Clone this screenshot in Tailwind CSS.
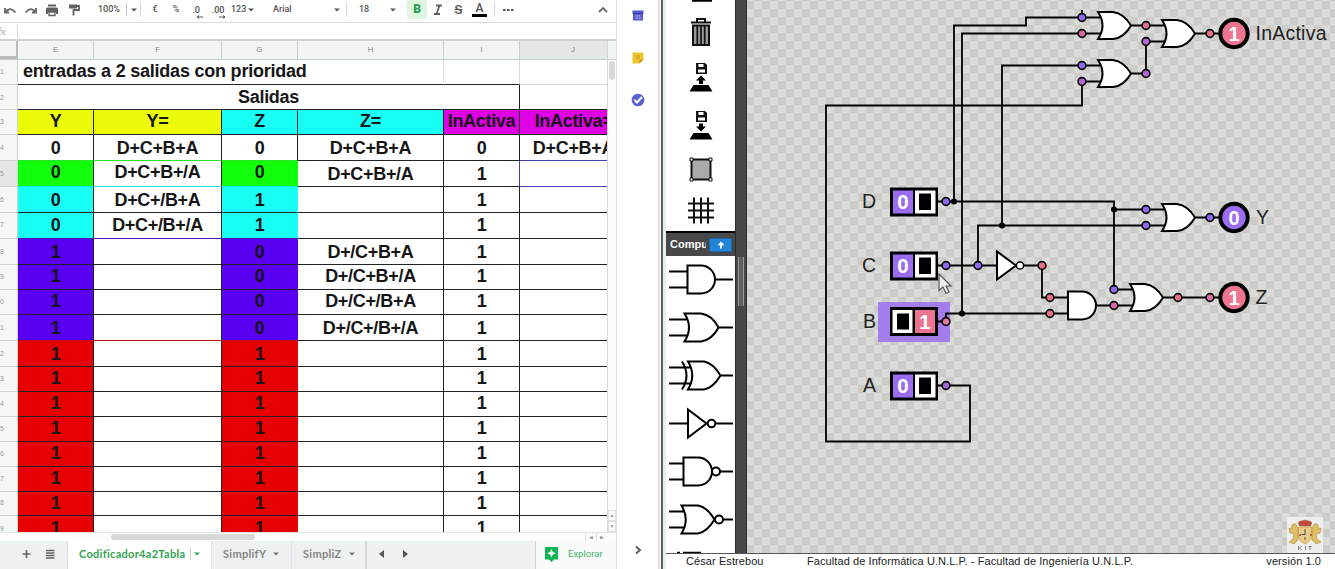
<!DOCTYPE html>
<html lang="es">
<head>
<meta charset="utf-8">
<title>Codificador 4 a 2</title>
<script src="https://cdn.jsdelivr.net/npm/@tailwindcss/browser@4"></script>
</head>
<body class="w-[1335px] h-[569px] overflow-hidden bg-white font-['Liberation_Sans',sans-serif]">
<div class="flex w-[1335px] h-[569px]">

  <!-- Spreadsheet -->
  <section class="w-[617px] shrink-0 flex flex-col border-r border-[#dcdfde] overflow-hidden">
    <div class="h-[23px] shrink-0 flex items-center pb-[3px] border-b border-[#dcdedc] text-[#555] font-[Roboto,sans-serif] text-[9px] font-medium bg-[#fdfefd] whitespace-nowrap">
      <span class="w-[20px] shrink-0"><svg class="w-[20px] h-[18px]" viewBox="0 0 20 18"><path d="M9 11.500H5V7M5.500 11Q10 5 15.500 11.500" fill="none" stroke="#666" stroke-width="1.900"/></svg></span>
      <span class="w-[22px] shrink-0"><svg class="w-[22px] h-[18px]" viewBox="0 0 22 18"><path d="M12 11.500H16V7M15.500 11Q11 5 5.500 11.500" fill="none" stroke="#666" stroke-width="1.900"/></svg></span>
      <span class="w-[20px] shrink-0"><svg class="w-[20px] h-[18px]" viewBox="0 0 20 18"><path d="M6 3.500h8v2H6zM5.500 6.500h9a1.500 1.500 0 0 1 1.500 1.500V13h-2v-2H6v2H4V8A1.500 1.500 0 0 1 5.500 6.500z" fill="#606060"/><path d="M7 11h6v3.500H7z" fill="#fff" stroke="#606060" stroke-width="1.300"/></svg></span>
      <span class="w-[23px] shrink-0"><svg class="w-[23px] h-[18px]" viewBox="0 0 23 18"><path d="M7 3.500h8v4H7z" fill="#606060"/><path d="M15 5h2v4h-5.500v5.500" fill="none" stroke="#606060" stroke-width="1.800"/></svg></span>
      <span class="w-[40px] shrink-0 pl-[13px]">100%</span>
      <span class="w-[3px] h-[13px] border-l border-[#cdb9d2] ml-[1px]"></span>
      <span class="w-[10px] shrink-0 flex justify-center"><svg class="w-[6px] h-[4px]" viewBox="0 0 6 4"><path d="M0 .5h6L3 3.500z" fill="#555"/></svg></span>
      <span class="w-[4px] h-[15px] border-l border-[#dadada] ml-[1px]"></span>
      <span class="w-[22px] shrink-0 text-center">€</span>
      <span class="w-[20px] shrink-0 text-center">%</span>
      <span class="w-[20px] shrink-0 flex flex-col items-center leading-[10px] pt-[4px]">.0<svg class="w-[7px] h-[4px] ml-[7px]" viewBox="0 0 7 4"><path d="M7 2H1M3 .5L1 2l2 1.500" stroke="#555" fill="none"/></svg></span>
      <span class="w-[24px] shrink-0 flex flex-col items-center leading-[10px] pt-[4px]">.00<svg class="w-[7px] h-[4px] ml-[9px]" viewBox="0 0 7 4"><path d="M0 2h6M4 .5L6 2 4 3.500" stroke="#555" fill="none"/></svg></span>
      <span class="w-[32px] shrink-0 pl-[1px] flex items-center gap-[2px]">123<svg class="w-[6px] h-[4px]" viewBox="0 0 6 4"><path d="M0 .5h6L3 3.500z" fill="#555"/></svg></span>
      <span class="w-[67px] shrink-0 pl-[11px]">Arial</span>
      <span class="w-[16px] shrink-0 flex justify-center"><svg class="w-[6px] h-[4px]" viewBox="0 0 6 4"><path d="M0 .5h6L3 3.500z" fill="#555"/></svg></span>
      <span class="w-[1px] h-[15px] bg-[#dadada] ml-[1px]"></span>
      <span class="w-[34px] shrink-0 text-center">18</span>
      <span class="w-[24px] shrink-0 flex justify-center"><svg class="w-[6px] h-[4px]" viewBox="0 0 6 4"><path d="M0 .5h6L3 3.500z" fill="#555"/></svg></span>
      <span class="w-[20px] h-[19px] shrink-0 ml-[2px] bg-[#dff5e0] text-[#22a555] text-[12px] font-black text-center leading-[19px]">B</span>
      <span class="w-[21px] shrink-0"><svg class="w-[21px] h-[18px]" viewBox="0 0 21 18"><path d="M9 4.500h6M7 13h6M12.500 4.500L9.500 13" stroke="#606060" stroke-width="1.800" fill="none"/></svg></span>
      <span class="w-[21px] shrink-0 text-center text-[13px] line-through">S</span>
      <span class="w-[21px] shrink-0 flex flex-col items-center text-[12px] leading-[12px]">A<i class="block w-[15px] h-[3px] bg-black"></i></span>
      <span class="w-[1px] h-[15px] bg-[#dadada] ml-[4px]"></span>
      <span class="w-[26px] shrink-0"><svg class="w-[26px] h-[18px]" viewBox="0 0 26 18"><path d="M8 9h2.500M12 9h2.500M16 9h2.500" stroke="#555" stroke-width="2.200"/></svg></span>
      <span class="w-[20px] shrink-0 ml-[72px]"><svg class="w-[20px] h-[18px]" viewBox="0 0 20 18"><path d="M6 11l4-4 4 4" stroke="#666" stroke-width="1.800" fill="none"/></svg></span>
    </div>
    <div class="h-[18px] shrink-0 flex items-center border-b-2 border-[#cfd2d0]">
      <span class="w-[18px] h-[13px] border-r border-[#d4d4d4] text-[11px] leading-[12px] italic font-['Liberation_Serif',serif] text-[#aaa]"><span class="-ml-[2px]">fx</span></span>
    </div>
    <div class="flex h-[491px] shrink-0">
      <div class="w-[608px] shrink-0 overflow-hidden border-r border-[#d5d8d6]" id="sheet">
        <div class="h-[19px] flex bg-[#f1f6f3] border-b border-[#c9cecb] text-[7.500px] leading-[18px] text-[#858585] text-center">
          <span class="w-[18px] shrink-0 border-r-2 border-b-3 border-[#b9bdbb]"></span>
          <span class="w-[76px] shrink-0 border-r border-[#c9cecb]">E</span>
          <span class="w-[128px] shrink-0 border-r border-[#c9cecb]">F</span>
          <span class="w-[76px] shrink-0 border-r border-[#c9cecb]">G</span>
          <span class="w-[146px] shrink-0 border-r border-[#c9cecb]">H</span>
          <span class="w-[76px] shrink-0 border-r border-[#c9cecb]">I</span>
          <span class="w-[106px] shrink-0 bg-[#e3e8e6]">J</span>
        </div>
      </div>
      <div class="flex-1 flex flex-col items-center bg-[#fbfdfc]">
        <span class="w-full h-[19px] bg-[#f1f6f3] border-b border-[#c9cecb]"></span>
        <span class="w-[6px] h-[19px] mt-[1px] rounded bg-[#d8dad9]"></span>
        <span class="mt-auto w-full h-[11px] border border-[#dfe1e0] text-[5px] leading-[9px] text-center text-[#999]">▲</span>
        <span class="w-full h-[11px] border border-[#dfe1e0] text-[5px] leading-[9px] text-center text-[#999]">▼</span>
      </div>
    </div>
    <div class="h-[9px] shrink-0 flex items-center border-t border-[#dfe2e0] bg-[#fcfdfc]">
      <span class="w-[144px] h-[6px] ml-[111px] rounded bg-[#d7dad9]"></span>
      <span class="ml-auto w-[11px] h-[9px] border-l border-[#ddd] text-[5px] leading-[9px] text-center text-[#999]">◀</span>
      <span class="w-[11px] h-[9px] border-l border-[#ddd] text-[5px] leading-[9px] text-center text-[#999] mr-[9px]">▶</span>
    </div>
    <div class="flex-1 flex items-center bg-[#edf1ef] font-[Lato,sans-serif] text-[11px] font-bold text-[#858585] whitespace-nowrap">
      <svg class="w-[67px] h-[28px] shrink-0" viewBox="0 0 67 28"><path d="M22.500 13h8M26.500 9v8" stroke="#666" stroke-width="1.700"/><path d="M46 9.500h8.500M46 12h8.500M46 14.500h8.500M46 17h8.500" stroke="#666" stroke-width="1.700"/></svg>
      <span class="w-[145px] h-full shrink-0 bg-white flex items-center pl-[11px] pb-[2px] text-[#32a350] border-x border-[#dde1df]"><span class="w-[108px] tracking-[0.300px]">Codificador4a2Tabla</span><i class="w-[1px] h-[12px] bg-[#ccc] ml-[3px]"></i><svg class="w-[6px] h-[4px] ml-[3px]" viewBox="0 0 6 4"><path d="M0 .5h6L3 3.500z" fill="#32a350"/></svg></span>
      <span class="w-[80px] h-full shrink-0 flex items-center pl-[11px] pb-[2px] border-r border-[#e2e6e4]"><span class="w-[50px] tracking-[0.300px]">SimplifY</span><svg class="w-[6px] h-[4px]" viewBox="0 0 6 4"><path d="M0 .5h6L3 3.500z" fill="#777"/></svg></span>
      <span class="w-[75px] h-full shrink-0 flex items-center pl-[11px] pb-[2px] border-r-2 border-[#d3d8d5]"><span class="w-[46px] tracking-[0.300px]">SimpliZ</span><svg class="w-[6px] h-[4px]" viewBox="0 0 6 4"><path d="M0 .5h6L3 3.500z" fill="#777"/></svg></span>
      <svg class="w-[60px] h-[28px] shrink-0" viewBox="0 0 60 28"><path d="M17 9v8l-5-4zM36 9v8l5-4z" fill="#555"/></svg>
      <span class="ml-auto w-[81px] h-full shrink-0 flex items-center bg-[#f8fbf9] border-l border-[#cfd4d1] text-[#44b768] font-[Roboto,sans-serif] text-[9.500px] font-normal pb-[2px]">
        <svg class="w-[15px] h-[16px] ml-[8px] mr-[9px]" viewBox="0 0 15 16"><path d="M1 1h13v12.500h-4L7.500 16 5 13.500H1z" fill="#14b355"/><path d="M7.500 3l1.300 3 3 1.300-3 1.300-1.300 3-1.300-3-3-1.300 3-1.300z" fill="#fff"/></svg>Explorar</span>
    </div>
  </section>

  <!-- Side panel of the spreadsheet -->
  <aside class="w-[41px] shrink-0 flex flex-col items-center bg-[#fdfefd]">
    <svg class="w-[12px] h-[11px] mt-[10px]" viewBox="0 0 12 11"><path d="M.5.500h11V4h-.5v6.500H1V4H.5z" fill="#5557cf"/><path d="M1 3.500h10" stroke="#3c3eae"/><text x="3" y="9" font-size="5.500" fill="#c8c8f4">31</text></svg>
    <svg class="w-[12px] h-[12px] mt-[31px]" viewBox="0 0 12 12"><path d="M.5.500h11v7l-4 4h-7z" fill="#edc62f"/><path d="M7.500 11.500v-4h4z" fill="#c9991b"/><circle cx="6" cy="5" r="1.500" fill="none" stroke="#c79a20"/></svg>
    <svg class="w-[14px] h-[14px] mt-[29px]" viewBox="0 0 14 14"><circle cx="7" cy="7" r="6.300" fill="#5561d2"/><path d="M3.500 7l2.500 2.500 5-5.500" fill="none" stroke="#fff" stroke-width="2"/><circle cx="3.500" cy="7" r="1" fill="#e8c34a"/></svg>
    <svg class="w-[12px] h-[12px] mt-auto mb-[13px]" viewBox="0 0 12 12"><path d="M4 2.500l4 3.500-4 3.500" fill="none" stroke="#555" stroke-width="1.800"/></svg>
  </aside>

  <div class="w-[8px] shrink-0 bg-[#e9efed] border-l border-[#d9dcdd] flex"><span class="ml-[2px] w-[2px] bg-[#5d6563]"></span></div>

  <!-- Logic simulator -->
  <main class="flex-1 flex flex-col">
    <div class="h-[553px] flex shrink-0">
      <div class="w-[69px] shrink-0 flex flex-col bg-[#fdfefd]">
        <svg class="w-[69px] h-[231px] shrink-0" viewBox="666 0 69 231">
          <path d="M692 .5h20" stroke="#000" stroke-width="2.500"/>
          <path d="M691 22.500h20M697 22v-3h8v3" fill="none" stroke="#111" stroke-width="2"/>
          <path d="M693 25.500h16V45h-16z" fill="#999" stroke="#111" stroke-width="2"/><path d="M697.300 26v18M701 26v18M704.700 26v18" stroke="#111" stroke-width="1.700"/>
          <g id="disk"><path d="M696 63h9l2 2v9h-11z" fill="#111"/><path d="M698.500 64h5v3h-5zM698 69.500h7v3h-7z" fill="#fff"/></g>
          <path d="M701 75.500l5 5h-3v3.500h-4v-3.500h-3z" fill="#000"/><path d="M693.500 85h15l4 6.500h-23z" fill="#000"/>
          <use href="#disk" y="48"/>
          <path d="M699 123.500h4v3h3l-5 5-5-5h3z" fill="#000"/><path d="M693.500 133h15l4 6.500h-23z" fill="#000"/>
          <path d="M691.500 159.500h19v20h-19z" fill="#aaa" stroke="#111" stroke-width="2"/>
          <path d="M690 158h3v3h-3zM709 158h3v3h-3zM690 178h3v3h-3zM709 178h3v3h-3z" fill="#fff" stroke="#111"/>
          <path d="M688 203.500h26M688 210.500h26M688 217.500h26M694 197.500v26M701 197.500v26M708 197.500v26" stroke="#111" stroke-width="2"/>
        </svg>
        <div class="h-[25px] shrink-0 border-t-2 border-t-black flex items-center bg-[#484848] pl-[4px] text-white text-[11px] font-bold">
          <span class="w-[36px] overflow-hidden">Compuertas</span>
          <span class="ml-[3px] w-[23px] h-[14px] bg-[#2384d8] border border-[#1464aa] rounded-[1px] flex justify-center items-center"><svg class="w-[8px] h-[8px]" viewBox="0 0 8 8"><path d="M4 .5l3.500 3.700H5V7.500H3V4.200H.5z" fill="#fff"/></svg></span>
        </div>
        <svg class="w-[69px] h-[297px] shrink-0" viewBox="666 256 69 297" fill="none" stroke="#000" stroke-width="2">
          <path d="M669 271.500h18M669 287.500h18M715 279.500h18M687.500 265.500H701a14 14 0 0 1 0 28H687.500z"/>
          <path d="M669 319.500h19M669 335.500h19M718.500 327.500h14.500M684.500 313.500H701Q712 315 718.500 327.500Q712 340 701 341.500H684.500Q693.500 327.500 684.500 313.500z"/>
          <path d="M669 367.500h22M669 383.500h22M720.500 375.500h12.500M688 361.500H704Q713 363 720.500 375.500Q713 388 704 389.500H688Q696.500 375.500 688 361.500zM682 361.500Q691 375.500 682 389.500"/>
          <path d="M669 423.500h18.500M716 423.500h17M688 409.500V437.500L706.500 423.500z"/><circle cx="711.500" cy="423.500" r="3.800"/>
          <path d="M669 463.500h14M669 479.500h14M720 471.500h13M683.500 457.500H698a14 14 0 0 1 0 28H683.500z"/><circle cx="716" cy="471.500" r="4"/>
          <path d="M669 511.500h16M669 527.500h16M723 519.500h10M681.500 505.500H698Q707 507 714.500 519.500Q707 532 698 533.500H681.500Q690 519.500 681.500 505.500z"/><circle cx="719" cy="519.500" r="4"/>
          <path d="M677 553h3M683 553h18" stroke-width="2.500"/>
        </svg>
      </div>
      <div class="w-[12px] shrink-0 bg-[#464746] border-x border-[#2b2c2b] flex flex-col items-center"><span class="mt-[257px] w-[6px] h-[49px] bg-[#5e5f5e] border-x border-[#999]"></span></div>

      <!-- Circuit canvas -->
      <svg id="canvas" class="w-[588px] h-[553px] shrink-0" viewBox="747 0 588 553" font-family="Liberation Sans, sans-serif">
        <defs>
          <pattern id="chk" x="746" y="1" width="16" height="16" patternUnits="userSpaceOnUse"><path d="M0 0h16v16H0z" fill="#cccdc9"/><path d="M8 0h8v8H8zM0 8h8v8H0z" fill="#dadbd8"/></pattern>
          <g id="or" fill="#fdfefd" stroke="#000" stroke-width="2"><path d="M0-13.500H15Q26-12 33 0Q26 12.500 15 13.500H0Q9 0 0-13.500z"/></g>
          <g id="off"><path d="M890 187.500h48v29h-48z" fill="#000"/><path d="M893 190.500h20v23h-20z" fill="#9c6cf2"/><path d="M915 190.500h20.500v23H915z" fill="#fff"/><path d="M919 193.500h12v16.500h-12z" fill="#000"/><text x="903" y="209.300" font-size="20.500" font-weight="bold" fill="#fff" text-anchor="middle">0</text></g>
        </defs>
        <path d="M747 0h588v553H747z" fill="url(#chk)"/>
        <path d="M878 302h72v40h-72z" fill="#a47ceb"/>
        <g fill="none" stroke="#000" stroke-width="1.800">
          <path d="M954 201.500V25.500H1026V17.500H1100M1082 10V17.500M962 313.500V33.500H1102"/>
          <path d="M1002 225.500V65.500H1102M1082 81.500H1102M1082 81.500V105.500H826V441.500H970V385.500H938"/>
          <path d="M1130 25.500H1166M1130 73.500H1146V41.500H1166M1194 33.500H1222"/>
          <path d="M938 201.500H1114V289.500H1134M1114 209.500H1166M978 265.500V225.500H1166M1194 217.500H1222"/>
          <path d="M938 265.500H997M1024 265.500H1042V297.500H1068M938 321.500H946V313.500H1068M1096 305.500H1134M1162 297.500H1222"/>
        </g>
        <use href="#or" x="1098" y="25.500"/><use href="#or" x="1162" y="33.500"/><use href="#or" x="1098" y="73.500"/><use href="#or" x="1162" y="217.500"/><use href="#or" x="1130" y="297.500"/>
        <path d="M1068 291.500h14a14 14 0 0 1 0 28h-14z" fill="#fff" stroke="#000" stroke-width="2"/>
        <path d="M997 251.500V279.500L1016 265.500z" fill="#fff" stroke="#000" stroke-width="2"/><circle cx="1020" cy="265.500" r="3.600" fill="#fff" stroke="#000" stroke-width="1.500"/>
        <g><circle cx="954" cy="201.500" r="3"/><circle cx="962" cy="313.500" r="3"/><circle cx="1002" cy="225.500" r="3"/><circle cx="1114" cy="209.500" r="3"/></g>
        <use href="#off"/><use href="#off" y="64"/><use href="#off" y="184"/>
        <path d="M890 307h48v29h-48z" fill="#000"/><path d="M892.500 310h20v23h-20z" fill="#fff"/><path d="M897 313.500h12v16h-12z" fill="#000"/><path d="M915 310h20v23h-20z" fill="#ee7590"/>
        <text x="925" y="329" font-size="20.500" font-weight="bold" fill="#fff" text-anchor="middle">1</text>
        <g id="nodes" stroke="#000" stroke-width="1.600"></g>
        <g stroke="#000" stroke-width="4"><circle cx="1234" cy="33.500" r="13.700" fill="#ee7590"/><circle cx="1234" cy="217.500" r="13.700" fill="#9c6cf2"/><circle cx="1234" cy="297.500" r="13.700" fill="#ee7590"/></g>
        <g font-size="20" font-weight="bold" fill="#fff" text-anchor="middle"><text x="1234" y="40.800">1</text><text x="1234" y="224.800">0</text><text x="1234" y="304.800">1</text></g>
        <g font-size="19.500" fill="#222"><text x="862" y="208">D</text><text x="862" y="272">C</text><text x="863" y="328">B</text><text x="863" y="392">A</text>
          <text x="1255.500" y="40" textLength="71">InActiva</text><text x="1256" y="224">Y</text><text x="1255.500" y="304">Z</text></g>
        <path d="M939 274V290.500L943 287L946 293.500L949 292L946 286H951z" fill="#eee" stroke="#555" stroke-width="1.200"/>
        <!-- Coat of arms -->
        <path d="M1287 517h36v36h-36z" fill="#eeefed"/>
        <g fill="#dfbd62" stroke="#b28a3b" stroke-width=".6">
          <path d="M1297 526q-2-4-5-1l-1 4-2-1 1 5 4 1-1 5-4 3 5 2 4-4v-10zM1313 526q2-4 5-1l1 4 2-1-1 5-4 1 1 5 4 3-5 2-4-4v-10z"/>
          <path d="M1298.500 527h13v9q0 5-6.500 8-6.500-3-6.500-8z" fill="#ebcc86"/>
        </g>
        <path d="M1299.500 526q-3-5 2-5l3.500-1 3.500 1q5 0 2 5z" fill="#c5483f" stroke="#9b6930" stroke-width=".6"/><path d="M1305 529v5M1301.500 534.500h4M1305 537v3" stroke="#44506b" stroke-width="1"/>
        <circle cx="1300" cy="535" r="1" fill="#b43d35"/><circle cx="1311" cy="535" r="1" fill="#b43d35"/>
        <path d="M1298.500 546v4M1301.500 546l-2 2 2 2M1305.500 546v4M1308.500 546.500h3M1310 546v4" stroke="#666" stroke-width=".8" fill="none"/>
      </svg>
    </div>
    <footer class="flex-1 flex border-t-[1.500px] border-[#555] text-[11px] leading-[14px] text-[#222] whitespace-nowrap bg-[#fdfefd]">
      <span class="w-[141px] pl-[20px] tracking-[0.080px]">César Estrebou</span>
      <span class="tracking-[0.080px]">Facultad de Informática U.N.L.P. - Facultad de Ingeniería U.N.L.P.</span>
      <span class="ml-auto mr-[14px] tracking-[0.080px]">versión 1.0</span>
    </footer>
  </main>
</div>

<script>
const P = '#5900f2', C = '#18fff6', R = '#e60000', G = '#12ff0c';
// Bottom edge of every sheet row, in page pixels
const ends = [85,110,135,161,187,213,239,265,290,315,341,367,392,417,442,467,492,516,541];
const eq = ['D+C+B+A','D+C+B+/A','D+C+/B+A','D+C+/B+/A','','','','','','','','','','',''];
const eqH = ['D+C+B+A','D+C+B+/A','','','D+/C+B+A','D+/C+B+/A','D+/C+/B+A','D+/C+/B+/A','','','','','','',''];
const widths = [76,128,76,146,76,108];
const raised = [1, 3, 7, 9, 10, 13, 14, 15, 16, 17, 18];
const sheet = document.getElementById('sheet');
let top0 = 60, html = '';
const cell = (w, t, bg, bottom, right, lh) => `<span class="shrink-0 text-center border-b border-r overflow-hidden" style="width:${w}px;background:${bg};border-bottom-color:${bottom};border-right-color:${right}${lh ? `;line-height:${lh}px` : ''}">${t}</span>`;
ends.forEach((end, i) => {
  const h = end - top0, n = i + 1; top0 = end;
  const lh = raised.includes(n) ? h - 2 : h;
  html += `<div class="flex text-[18px] tracking-[-0.320px] font-bold text-[#161616] whitespace-nowrap" style="height:${h}px;line-height:${lh}px">`;
  html += `<span class="w-[18px] shrink-0 ${n === 5 ? 'bg-[#e3e8e6]' : 'bg-[#f3f8f5]'} border-r border-b border-[#cfd3d1] text-[7px] font-normal text-[#999] overflow-hidden">${n > 9 ? n % 10 : n}</span>`;
  if (n === 1) {
    html += `<span class="w-[426px] shrink-0 pl-[5px] tracking-[-0.220px] border-b border-b-[#222] border-r border-r-[#d9dbda]">entradas a 2 salidas con prioridad</span>` + cell(76,'','#fff','#222','#d9dbda') + cell(108,'','#fff','#d9dbda','#fff');
  } else if (n === 2) {
    html += `<span class="w-[502px] shrink-0 text-center border-b border-r border-[#222]">Salidas</span>` + cell(108,'','#fff','#222','#fff');
  } else {
    let v;
    if (n === 3) v = [['Y','#ebfb08'],['Y=','#ebfb08'],['Z',C],['Z=',C],['InActiva','#e000e6'],['InActiva=','#e000e6']];
    else {
      const k = n - 4, bg = k === 0 ? '#fff' : k === 1 ? G : k < 4 ? C : k < 8 ? P : R;
      v = [[k < 4 ? '0' : '1', bg],[eq[k] || '','#fff'],[k < 2 ? '0' : k < 4 ? '1' : k < 8 ? '0' : '1', bg],[eqH[k] || '','#fff'],[k ? '1' : '0','#fff'],[k ? '' : 'D+C+B+A','#fff']];
    }
    v.forEach((c, j) => {
      let b = '#222', r = '#222';
      const edge = {4: '#2be32b', 5: '#18e8e0', 7: '#4c12b8', 11: '#b80d14'}[n];
      if (edge && j < 3) b = edge;
      if (j === 2 && n > 4) r = v[2][1];
      if ((n === 4 || n === 5) && j === 5) b = '#3f3fb5';
      if (n === 5 && j === 4) r = '#3f3fb5';
      html += cell(widths[j], c[0], c[1], b, r, n === 5 && j < 3 ? h - 3 : 0);
    });
  }
  html += '</div>';
});
sheet.insertAdjacentHTML('beforeend', html);

const V = '#9068f0', K = '#e86f88', M = '#b266d6';
document.getElementById('nodes').innerHTML = [
  [1082,17.5,V],[1082,33.5,'#d868a0'],[1082,65.5,V],[1082,81.5,M],[1146,25.5,'#e07098'],[1146,41.5,M],[1146,73.5,M],[1210,33.5,K],
  [946,201.5,V],[946,265.5,V],[978,265.5,V],[946,321.5,'#e078a0'],[946,385.5,'#a468e0'],[1042,265.5,K],[1050,297.5,K],[1050,313.5,K],
  [1146,209.5,V],[1146,225.5,V],[1210,217.5,V],[1114,289.5,V],[1114,305.5,'#d868a8'],[1178,297.5,K],[1210,297.5,'#dc70a8']
].map(([x, y, f]) => `<circle cx="${x}" cy="${y}" r="3.900" fill="${f}"/>`).join('');
</script>
</body>
</html>
